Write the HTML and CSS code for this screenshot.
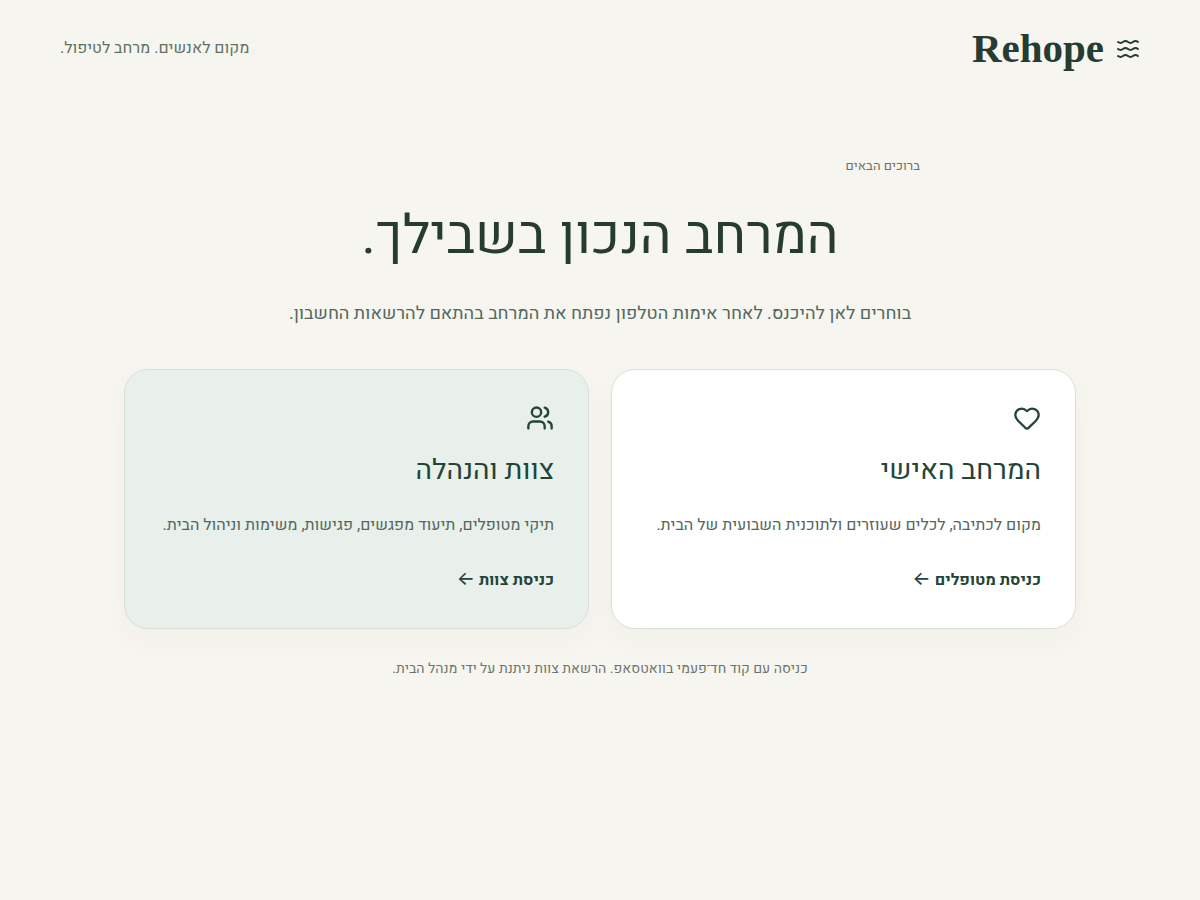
FILE: index.html
```html
<!DOCTYPE html>
<html lang="he" dir="rtl">
<head>
<meta charset="utf-8">
<meta name="viewport" content="width=device-width, initial-scale=1">
<title>Rehope</title>
<link rel="stylesheet" href="styles.css">
</head>
<body>
<header class="topbar">
  <a class="brand" href="#">
    <svg class="brand-icon" viewBox="0 0 24 24" aria-hidden="true"><path d="M2 6q2.500 1.800 5 0t5 0 5 0 5 0"/><path d="M2 13q2.500 1.800 5 0t5 0 5 0 5 0"/><path d="M2 20q2.500 1.800 5 0t5 0 5 0 5 0"/></svg>
    <span>Rehope</span>
  </a>
  <p class="tagline">מקום לאנשים. מרחב לטיפול.</p>
</header>
<main class="portal">
  <section class="intro">
    <p class="eyebrow">ברוכים הבאים</p>
    <h1>המרחב הנכון בשבילך.</h1>
    <p class="lead">בוחרים לאן להיכנס. לאחר אימות הטלפון נפתח את המרחב בהתאם להרשאות החשבון.</p>
  </section>
  <div class="choices">
    <a class="card" href="#">
      <svg class="card-icon" viewBox="0 0 24 24" aria-hidden="true"><path d="M2 9.500a5.500 5.500 0 0 1 9.591-3.676.56.56 0 0 0 .818 0A5.490 5.490 0 0 1 22 9.500c0 2.290-1.500 4-3 5.500l-5.492 5.313a2 2 0 0 1-3 .019L5 15c-1.500-1.500-3-3.200-3-5.500"/></svg>
      <h2>המרחב האישי</h2>
      <p>מקום לכתיבה, לכלים שעוזרים ולתוכנית השבועית של הבית.</p>
      <span class="enter">כניסת מטופלים <span class="arrow">←</span></span>
    </a>
    <a class="card card-staff" href="#">
      <svg class="card-icon" viewBox="0 0 24 24" aria-hidden="true"><path d="M16 21v-2a4 4 0 0 0-4-4H6a4 4 0 0 0-4 4v2"/><circle cx="9" cy="7" r="4"/><path d="M22 21v-2a4 4 0 0 0-3-3.870"/><path d="M16 3.130a4 4 0 0 1 0 7.750"/></svg>
      <h2>צוות והנהלה</h2>
      <p>תיקי מטופלים, תיעוד מפגשים, פגישות, משימות וניהול הבית.</p>
      <span class="enter">כניסת צוות <span class="arrow">←</span></span>
    </a>
  </div>
  <p class="note">כניסה עם קוד חד־פעמי בוואטסאפ. הרשאת צוות ניתנת על ידי מנהל הבית.</p>
</main>
</body>
</html>
```
FILE: styles.css
```css
* { box-sizing: border-box; }
body {
  margin: 0;
  background: #f7f5f0;
  color: #263c30;
  font-family: "Heebo", "Open Sans", sans-serif;
  font-size: 16px;
  line-height: 24px;
}
h1, h2, p { margin: 0; font-weight: 400; }
a { color: inherit; text-decoration: none; }
svg { fill: none; stroke: currentColor; stroke-width: 2; stroke-linecap: round; stroke-linejoin: round; }
.topbar { display: flex; align-items: center; justify-content: space-between; padding: 20px 60px; }
.brand { display: flex; align-items: center; gap: 12px; font-family: "Liberation Serif", serif; font-size: 41px; font-weight: 700; line-height: 56px; }
.brand-icon { width: 24px; height: 24px; }
.tagline { color: #5f7266; }
.portal { max-width: 1000px; margin: 0 auto; padding: 58px 24px; }
.intro { text-align: center; }
.eyebrow { max-width: 640px; margin: 0 auto; text-align: start; font-size: 13px; color: #6f7265; }
h1 { margin-top: 22px; font-size: 54px; line-height: 72px; }
.lead { margin-top: 27px; font-size: 18px; line-height: 30px; color: #53685d; }
.choices { display: grid; grid-template-columns: repeat(auto-fit, minmax(320px, 1fr)); gap: 22px; margin-top: 40px; }
.card { display: flex; flex-direction: column; align-items: flex-start; padding: 34px; border: 1px solid #d9e0d9; border-radius: 24px; background: #fff; box-shadow: 0 12px 30px #5a4a1808; color: #244438; }
.card-staff { background: #e9f0eb; }
.card-icon { width: 28px; height: 28px; }
h2 { margin-top: 16px; font-size: 28px; line-height: 46px; }
.card p { margin-top: 19px; color: #53685d; }
.enter { margin-top: 30px; padding-bottom: 2px; font-weight: 700; }
.arrow { font-family: Inter, sans-serif; font-size: 19px; font-weight: 500; }
.note { margin-top: 28px; text-align: center; font-size: 14px; color: #6c756b; }
```
